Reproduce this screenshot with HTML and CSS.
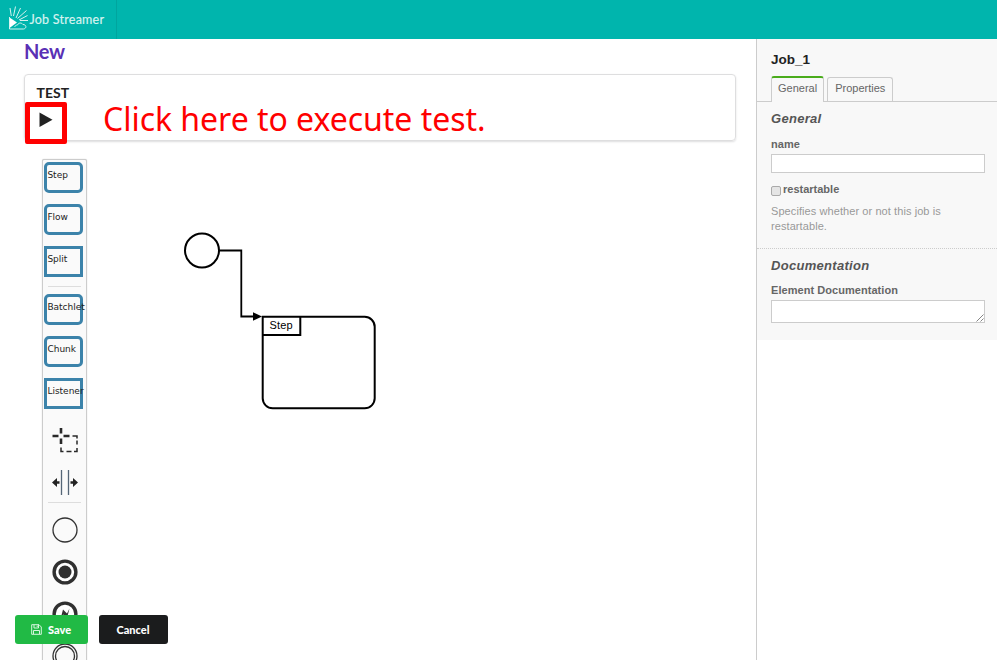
FILE: index.html
```html
<!DOCTYPE html>
<html lang="en">
<head>
<meta charset="utf-8">
<title>Job Streamer</title>
<link rel="stylesheet" href="styles.css">
</head>
<body>
<header class="menu">
  <a class="brand">
    <svg class="logo" width="22" height="26" viewBox="0 0 22 26" fill="none" stroke="#d5f3f0" stroke-width="1">
      <path d="M2 3l1.300 8M7.500 1.500L5.500 11M12.500 3L8 13M18.500 5.500L9.500 13.500M19.500 10.500L11 15M20 15.500H12"/>
      <path d="M1.500 12.500L9 17.500L1.500 23Z" fill="#fff" stroke="none"/>
      <path d="M1.500 12V24H15.500C19 23.500 18.500 19.500 15 19.500C13.500 17.500 10.500 17.500 9.500 20C8 20 7 21 6.500 22"/>
    </svg>
    <span class="brand-name">Job Streamer</span>
  </a>
</header>
<div class="layout">
  <main class="editor">
    <h1 class="title">New</h1>
    <section class="segment">
      <h2 class="segment-title">TEST</h2>
      <button class="run" aria-label="Run"><svg width="14" height="16" viewBox="0 0 14 16"><path d="M.500 .500L13.500 7.700L.500 15Z" fill="#222"/></svg></button>
      <span class="highlight"></span>
      <span class="callout">Click here to execute test.</span>
    </section>
    <div class="workspace">
      <div class="palette">
        <div class="entry"><div class="shape">Step</div></div>
        <div class="entry"><div class="shape">Flow</div></div>
        <div class="entry"><div class="shape square">Split</div></div>
        <hr class="separator">
        <div class="entry"><div class="shape">Batchlet</div></div>
        <div class="entry"><div class="shape">Chunk</div></div>
        <div class="entry"><div class="shape square">Listener</div></div>
        <div class="entry"><svg class="tool" width="30" height="30" viewBox="0 0 30 30" fill="none" stroke="#282828"><path stroke-width="2.600" d="M11 3V8.500M11 13.500V19M2.500 11H8.500M13.500 11H19.500"/><path stroke-width="1.500" d="M11 22.500V26.600H13.500M16.500 26.600H21.500M24 26.600H27V23M27 19.500V15.500M27 13.500V11H22.500"/></svg></div>
        <div class="entry"><svg class="tool" width="30" height="30" viewBox="0 0 30 30" fill="none"><path stroke="#567" stroke-width="1.300" d="M11.500 3V28M18.500 3V28"/><path stroke="#222" stroke-width="2.400" d="M4 15.500H9.500M20.500 15.500H26"/><path fill="#222" d="M2 15.500L7 11V20ZM28 15.500L23 11V20Z"/></svg></div>
        <hr class="separator">
        <div class="entry"><svg class="tool" width="30" height="30" viewBox="0 0 30 30"><circle cx="15" cy="15" r="12" fill="none" stroke="#333" stroke-width="1.300"/></svg></div>
        <div class="entry"><svg class="tool" width="30" height="30" viewBox="0 0 30 30"><circle cx="15" cy="15" r="10.900" fill="#fff" stroke="#303030" stroke-width="3.400"/><circle cx="15" cy="15" r="6.500" fill="#303030"/></svg></div>
        <div class="entry"><svg class="tool" width="30" height="30" viewBox="0 0 30 30"><circle cx="15" cy="15" r="10.900" fill="#fff" stroke="#303030" stroke-width="3.400"/><path fill="#303030" d="M10.500 20L13 10.500L17 14.500L19.500 9.500L17 19L13.500 15.500Z"/></svg></div>
        <div class="entry"><svg class="tool" width="30" height="30" viewBox="0 0 30 30" fill="none" stroke="#333" stroke-width="1.300"><circle cx="15" cy="15" r="12"/><circle cx="15" cy="15" r="9.500"/></svg></div>
      </div>
      <svg class="diagram" width="640" height="500" viewBox="87 159 640 500" fill="none" stroke="#000" stroke-width="2">
        <circle cx="202" cy="250.500" r="17"/>
        <path d="M219 250.500H241.300V316.500H254" stroke-width="1.800"/>
        <path d="M253 312.200L262 316.500L253 320.800Z" fill="#000" stroke="none"/>
        <path d="M262.700 316.800H364.700A10 10 0 0 1 374.700 326.800V398.300A10 10 0 0 1 364.700 408.300H272.700A10 10 0 0 1 262.700 398.300Z"/>
        <path d="M262.700 335H300.300V316.800"/>
        <text x="269.500" y="329" class="node-label">Step</text>
      </svg>
    </div>
    <div class="actions">
      <button class="button save"><svg width="11" height="11" viewBox="0 0 11 11" fill="none" stroke="#d6f5de"><path d="M.700 .700H8L10.300 3V10.300H.700ZM3 .700V4H7.500V.700M2.500 10V6.500H8.500V10M6.200 1.500V3"/></svg>Save</button>
      <button class="button cancel">Cancel</button>
    </div>
  </main>
  <aside class="panel">
    <div class="properties">
      <h3 class="element-name">Job_1</h3>
      <nav class="tabs"><a class="tab active">General</a><a class="tab">Properties</a></nav>
      <section class="group">
        <h4 class="group-title">General</h4>
        <label class="label" for="name">name</label>
        <input class="field" id="name" type="text">
        <div class="check-row"><span class="checkbox"></span><span>restartable</span></div>
        <p class="hint">Specifies whether or not this job is restartable.</p>
      </section>
      <section class="group documentation">
        <h4 class="group-title">Documentation</h4>
        <label class="label">Element Documentation</label>
        <div class="field area"><svg width="8" height="8" viewBox="0 0 8 8" stroke="#777" stroke-width=".900"><path d="M.500 7.500L7.500 .500M4.500 7.500L7.500 4.500"/></svg></div>
      </section>
    </div>
  </aside>
</div>
</body>
</html>
```
FILE: styles.css
```css
* { box-sizing: border-box; }
body { margin: 0; height: 660px; overflow: hidden; background: #fff; font-family: Lato, sans-serif; color: #222; }
h1, h2, h3, h4, p { margin: 0; }
button { font-family: inherit; border: 0; padding: 0; }
.menu { height: 39px; background: #00b5ad; display: flex; }
.brand { width: 117px; padding: 5px 0 0 8px; display: flex; border-right: 1px solid #00a59e; }
.logo { flex: none; }
.brand-name { font-size: 12.5px; line-height: 16px; margin-top: 7px; margin-left: -.5px; letter-spacing: .24px; color: #d5f3f0; -webkit-text-stroke: .2px #d5f3f0; white-space: nowrap; }
.layout { display: flex; height: 621px; }
.editor { width: 756px; position: relative; padding-left: 24px; overflow: hidden; }
.title { font-size: 20px; line-height: 24px; color: #5a30b5; letter-spacing: -.3px; }
.segment { position: relative; width: 712px; height: 67px; margin-top: 11px; padding: 10px 11.5px; border: 1px solid #dededf; border-radius: 4px; box-shadow: 0 1px 2px rgba(34,36,38,.15); }
.segment-title { font-size: 14px; line-height: 16px; }
.run { display: block; background: none; height: 16px; margin: 11px 0 0 2.5px; }
.highlight { position: absolute; left: 0; top: 27px; width: 42px; height: 42px; border: 5px solid #f00; border-radius: 2px; }
.callout { position: absolute; left: 78px; top: 22px; font: 32px/44px "Noto Sans", sans-serif; letter-spacing: -.03px; color: #f00; white-space: nowrap; }
.workspace { display: flex; margin: 18px 0 0 18px; }
.palette { flex: none; width: 45px; height: 540px; border: 1px solid #ccc; box-shadow: 0 0 1px #bbb; border-radius: 2px; background: #fafafa; }
.entry { height: 42px; padding: 2px 0 0 1px; }
.shape { width: 39px; height: 31px; border: 3px solid #3c83aa; border-radius: 5px; font: 9px/12px "DejaVu Sans", sans-serif; padding-top: 4px; padding-left: .4px; white-space: nowrap; }
.shape.square { border-radius: 0; }
.tool { display: block; margin: 5px 0 0 6px; }
.separator { height: 1px; margin: 0 5px 5px; border: 0; background: #ddd; }
.diagram { flex: none; }
.node-label { font: 11px "Liberation Sans", sans-serif; letter-spacing: .2px; fill: #000; stroke: none; }
.actions { position: absolute; left: 15px; top: 576px; display: flex; gap: 11px; }
.button { height: 29px; border-radius: 3px; font-size: 11px; font-weight: 900; color: #fff; display: flex; align-items: center; justify-content: center; padding: 0 1px 1px 0; }
.save { width: 73px; gap: 6px; background: #21ba45; }
.cancel { width: 69px; background: #1b1c1d; }
.panel { width: 241px; border-left: 1px solid #ccc; font-family: "Liberation Sans", sans-serif; color: #666; }
.properties { height: 301px; background: #f8f8f8; }
.element-name { padding: 13px 14px 0; font-size: 13.5px; line-height: 16px; color: #222; }
.tabs { height: 25px; margin-top: 9px; padding-left: 14px; display: flex; align-items: flex-start; gap: 3px; border-bottom: 1px solid #ccc; }
.tab { height: 24px; margin-top: 0; padding: 0 7px; border: 1px solid #ccc; border-bottom: 0; border-radius: 3px 3px 0 0; font-size: 11px; line-height: 20px; }
.tab.active { height: 26px; margin-top: -1px; padding: 0 6px; border-top: 2px solid #4aac1c; line-height: 21px; background: #f8f8f8; }
.group { padding: 9px 12px 0 14px; height: 146px; }
.group-title { font-size: 13px; line-height: 16px; font-style: italic; color: #555; letter-spacing: .3px; }
.label { display: block; margin-top: 10px; font-size: 11px; line-height: 14px; font-weight: bold; letter-spacing: .05px; }
.field { display: block; width: 214px; height: 19px; margin-top: 3px; padding: 0; border: 1px solid #ccc; background: #fff; }
.check-row { display: flex; align-items: center; gap: 2px; margin-top: 9px; font-size: 11px; line-height: 14px; font-weight: bold; }
.checkbox { width: 10px; height: 10px; margin-top: 3px; border: 1px solid #aaa; border-radius: 2px; background: #e5e5e5; }
.hint { margin-top: 8px; font-size: 11px; line-height: 15px; letter-spacing: .08px; color: #999; width: 190px; }
.documentation { height: 92px; border-top: 1px dotted #ccc; }
.documentation .label { margin-top: 9px; }
.area { height: 23px; display: flex; justify-content: flex-end; align-items: flex-end; }
```
